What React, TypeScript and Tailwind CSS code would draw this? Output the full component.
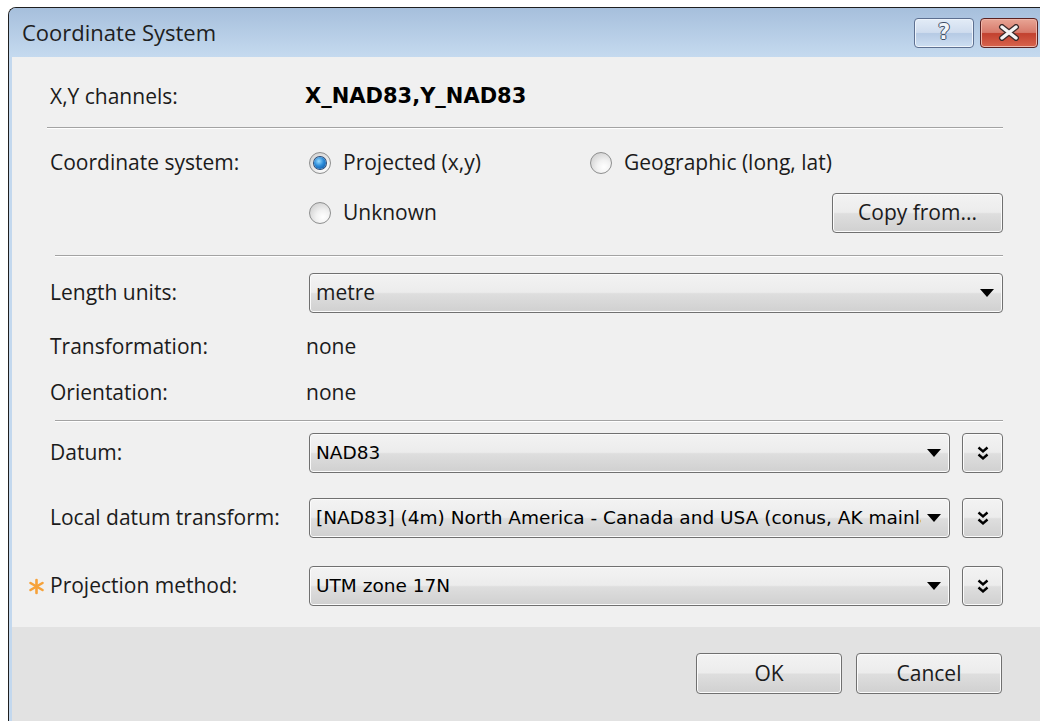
import type { ReactNode } from 'react';

const ui = "font-['Open_Sans',sans-serif] text-[21px] text-[#1b1b1b]";
const comboText = "font-['DejaVu_Sans',sans-serif] text-[18.5px] text-black";
const bevel =
  'rounded-[4px] border border-[#707070] bg-[linear-gradient(to_bottom,#f3f3f3_0%,#ececec_48%,#dedede_52%,#d0d0d0_100%)] shadow-[inset_0_0_0_1px_#fbfbfb]';

function Star() {
  return (
    <svg width="17" height="17" viewBox="0 0 17 17">
      <g stroke="#f6a23a" strokeWidth="2.6" strokeLinecap="round">
        <path d="M8.5 2v13" />
        <path d="M2.5 5l12 7" />
        <path d="M2.5 12l12-7" />
      </g>
    </svg>
  );
}

function Arrow() {
  return (
    <svg width="14" height="8" viewBox="0 0 14 8" className="shrink-0">
      <path d="M0 0h14L7 8z" fill="#000" />
    </svg>
  );
}

function Radio({ checked }: { checked?: boolean }) {
  return (
    <span className="flex h-[22px] w-[22px] shrink-0 items-center justify-center rounded-full border border-[#8e8f8f] bg-[radial-gradient(circle_at_65%_70%,#ffffff_0%,#f2f2f2_35%,#c4c4c4_100%)]">
      {checked && (
        <span className="h-[12px] w-[12px] rounded-full bg-[radial-gradient(circle_at_40%_35%,#9adcff_0%,#2b8bd9_45%,#0b4a96_100%)] shadow-[0_0_0_1px_#2a4a75]" />
      )}
    </span>
  );
}

function Combo({ value, font = comboText }: { value: string; font?: string }) {
  return (
    <div className={`flex h-[40px] min-w-0 flex-1 items-center gap-[6px] pl-[6px] pr-[8px] ${bevel}`}>
      <span className={`min-w-0 flex-1 overflow-hidden whitespace-nowrap ${font}`}>{value}</span>
      <Arrow />
    </div>
  );
}

function MoreButton() {
  return (
    <div className={`ml-[12px] flex h-[40px] w-[41px] shrink-0 items-center justify-center ${bevel}`}>
      <svg width="12" height="15" viewBox="0 0 12 15">
        <g stroke="#000" strokeWidth="2.4" fill="none">
          <path d="M1.5 1.5l4.5 4 4.5-4" />
          <path d="M1.5 8.5l4.5 4 4.5-4" />
        </g>
      </svg>
    </div>
  );
}

function Row({
  label,
  star,
  className = '',
  children,
}: {
  label: string;
  star?: boolean;
  className?: string;
  children: ReactNode;
}) {
  return (
    <div className={`flex items-center ${className}`}>
      <div className="flex w-[38px] shrink-0 justify-end pr-[5px]">{star && <Star />}</div>
      <div className={`w-[259px] shrink-0 ${ui}`}>{label}</div>
      <div className="flex min-w-0 flex-1 items-center pr-[37px]">{children}</div>
    </div>
  );
}

function Separator({ inset }: { inset: string }) {
  return <div className={`mr-[37px] h-[2px] shrink-0 border-t border-b border-t-[#a3a3a3] border-b-white ${inset}`} />;
}

export default function App() {
  return (
    <div className="h-[721px] w-[1040px] overflow-hidden bg-white pl-[8px] pt-[7px]">
      <div className="flex h-[714px] flex-col overflow-hidden rounded-tl-[8px] border-l border-t border-[#1f1f1f] bg-[#c3d8ee]">
        {/* caption */}
        <div className="flex h-[49px] shrink-0 items-center bg-[linear-gradient(to_bottom,#a6bfdc,#c5daef)] pl-[13px] pr-[2px]">
          <span className="flex-1 font-['Open_Sans',sans-serif] text-[22px] text-[#1e1e1e]">Coordinate System</span>
          <div className="flex h-[30px] w-[60px] items-center justify-center rounded-[4px] border border-[#5d7091] bg-[linear-gradient(to_bottom,#e3ecf7_0%,#cfdcee_48%,#b6cae4_52%,#cddff2_100%)] shadow-[inset_0_0_0_1px_#eef4fb]">
            <span className="font-['DejaVu_Sans',sans-serif] text-[21px] font-bold leading-none text-[#f2f5f9] [text-shadow:1px_0_#3d4d66,-1px_0_#3d4d66,0_1px_#3d4d66,0_-1px_#3d4d66]">
              ?
            </span>
          </div>
          <div className="ml-[6px] flex h-[30px] w-[58px] items-center justify-center rounded-[4px] border border-[#5a2222] bg-[linear-gradient(to_bottom,#e8a595_0%,#d77a6b_48%,#c2412f_52%,#d8644d_100%)] shadow-[inset_0_0_0_1px_#eeb5a8]">
            <svg width="24" height="17" viewBox="0 0 24 17">
              <g strokeLinecap="round">
                <path d="M5 3l14 11M19 3L5 14" stroke="#3b2a2a" strokeWidth="6" />
                <path d="M5 3l14 11M19 3L5 14" stroke="#f4f4f4" strokeWidth="3.4" />
              </g>
            </svg>
          </div>
        </div>

        <div className="flex min-h-0 flex-1 pl-[3px]">
          <div className="flex min-w-0 flex-1 flex-col overflow-hidden bg-[#f0f0f0]">
            <div className="h-[70px] shrink-0 pt-[10px]">
              <Row label="X,Y channels:" className="h-[60px]">
                <span className="ml-[-4px] font-['DejaVu_Sans',sans-serif] text-[21px] font-bold text-black">
                  X_NAD83,Y_NAD83
                </span>
              </Row>
            </div>
            <Separator inset="ml-[35px]" />

            <div className="h-[126px] shrink-0 pt-[9px]">
              <Row label="Coordinate system:" className="h-[50px]">
                <div className="flex w-[281px] items-center gap-[12px]">
                  <Radio checked />
                  <span className={ui}>Projected (x,y)</span>
                </div>
                <div className="flex items-center gap-[12px]">
                  <Radio />
                  <span className={ui}>Geographic (long, lat)</span>
                </div>
              </Row>
              <Row label="" className="h-[50px]">
                <div className="flex flex-1 items-center gap-[12px]">
                  <Radio />
                  <span className={ui}>Unknown</span>
                </div>
                <div className={`flex h-[40px] w-[171px] items-center justify-center ${bevel}`}>
                  <span className={ui}>Copy from...</span>
                </div>
              </Row>
            </div>
            <Separator inset="ml-[43px]" />

            <div className="h-[163px] shrink-0 pt-[16px]">
              <Row label="Length units:" className="h-[40px]">
                <Combo value="metre" font={ui} />
              </Row>
              <Row label="Transformation:" className="mt-[11px] h-[46px]">
                <span className={`ml-[-3px] ${ui}`}>none</span>
              </Row>
              <Row label="Orientation:" className="h-[46px]">
                <span className={`ml-[-3px] ${ui}`}>none</span>
              </Row>
            </div>
            <Separator inset="ml-[43px]" />

            <div className="h-[205px] shrink-0 pt-[11px]">
              <Row label="Datum:" className="h-[40px]">
                <Combo value="NAD83" />
                <MoreButton />
              </Row>
              <Row label="Local datum transform:" className="mt-[25px] h-[40px]">
                <Combo value="[NAD83] (4m) North America - Canada and USA (conus, AK mainland)" />
                <MoreButton />
              </Row>
              <Row label="Projection method:" star className="mt-[28px] h-[40px]">
                <Combo value="UTM zone 17N" />
                <MoreButton />
              </Row>
            </div>

            <div className="flex flex-1 justify-end gap-[14px] bg-[#e2e2e2] pr-[38px] pt-[26px]">
              <div className={`flex h-[41px] w-[146px] items-center justify-center ${bevel} border-[#3c7fb1] shadow-[inset_0_0_0_1px_#62cdf4,inset_0_0_0_2px_#c4ecfb]`}>
                <span className={ui}>OK</span>
              </div>
              <div className={`flex h-[41px] w-[146px] items-center justify-center ${bevel}`}>
                <span className={ui}>Cancel</span>
              </div>
            </div>
          </div>
        </div>
      </div>
    </div>
  );
}
